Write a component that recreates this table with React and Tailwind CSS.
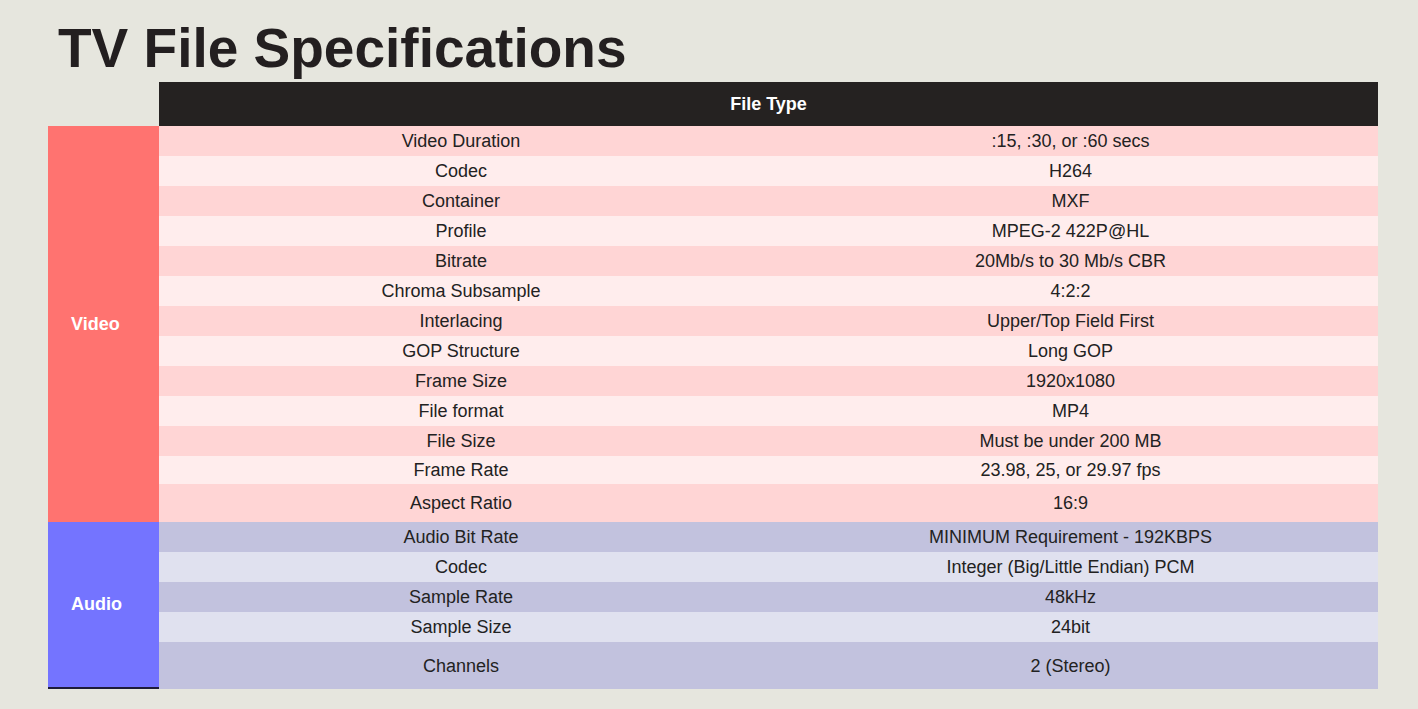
import React from "react";

const videoRows = [
  ["Video Duration", ":15, :30, or :60 secs"],
  ["Codec", "H264"],
  ["Container", "MXF"],
  ["Profile", "MPEG-2 422P@HL"],
  ["Bitrate", "20Mb/s to 30 Mb/s CBR"],
  ["Chroma Subsample", "4:2:2"],
  ["Interlacing", "Upper/Top Field First"],
  ["GOP Structure", "Long GOP"],
  ["Frame Size", "1920x1080"],
  ["File format", "MP4"],
  ["File Size", "Must be under 200 MB"],
  ["Frame Rate", "23.98, 25, or 29.97 fps", "h-[28px]"],
  ["Aspect Ratio", "16:9", "h-[38px]"],
];

const audioRows = [
  ["Audio Bit Rate", "MINIMUM Requirement - 192KBPS"],
  ["Codec", "Integer (Big/Little Endian) PCM"],
  ["Sample Rate", "48kHz"],
  ["Sample Size", "24bit"],
  ["Channels", "2 (Stereo)", "h-[47px]"],
];

const Row = ({ label, value, h, bg }) => (
  <div className={`grid grid-cols-[604px_615px] items-center pt-[1px] ${h || "h-[30px]"} ${bg}`}>
    <div className="text-center">{label}</div>
    <div className="text-center">{value}</div>
  </div>
);

const App = () => {
  return (
    <div
      className="min-h-[709px] bg-[#e6e6de] text-[#222222]"
      style={{ fontFamily: '"Liberation Sans", Arial, sans-serif' }}
    >
      {/* Title */}
      <h1 className="pl-[58px] pt-[21px] text-[55px] font-bold leading-none text-[#231f20]">
        TV File Specifications
      </h1>

      <div className="mt-[6px] ml-[48px] w-[1330px] text-[18px]">
        {/* Header */}
        <div className="ml-[111px] flex h-[44px] items-center justify-center bg-[#252221] pt-[1px] font-bold text-white">
          File Type
        </div>

        {/* Video */}
        <div className="flex">
          <div className="flex w-[111px] items-center bg-[#ff7370] pl-[23px] font-bold text-white">
            Video
          </div>
          <div className="flex-1">
            {videoRows.map(([label, value, h], i) => (
              <Row
                key={label + i}
                label={label}
                value={value}
                h={h}
                bg={i % 2 === 0 ? "bg-[#ffd5d5]" : "bg-[#ffeded]"}
              />
            ))}
          </div>
        </div>

        {/* Audio */}
        <div className="flex">
          <div className="flex w-[111px] items-center border-b-2 border-[#1d1b3a] bg-[#7474ff] pl-[23px] font-bold text-white">
            Audio
          </div>
          <div className="flex-1">
            {audioRows.map(([label, value, h], i) => (
              <Row
                key={label + i}
                label={label}
                value={value}
                h={h}
                bg={i % 2 === 0 ? "bg-[#c2c2de]" : "bg-[#e0e1ef]"}
              />
            ))}
          </div>
        </div>
      </div>
    </div>
  );
};

export default App;
